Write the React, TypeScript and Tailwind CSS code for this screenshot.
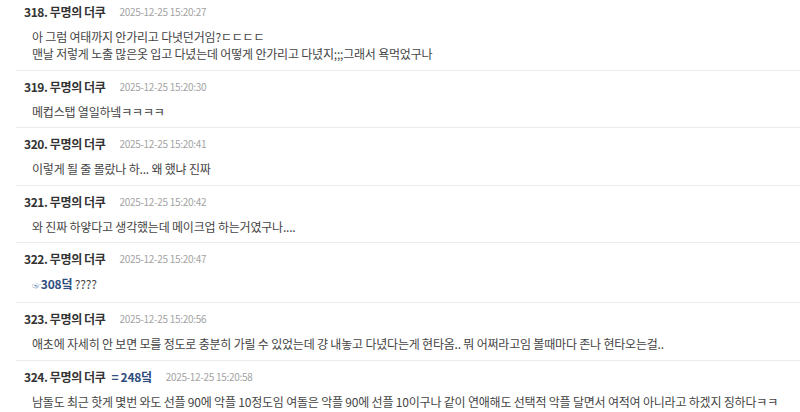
import React from "react";

type Comment = {
  no: number;
  date: string;
  reply?: string;
  lines: React.ReactNode[];
};

const comments: Comment[] = [
  {
    no: 318,
    date: "2025-12-25 15:20:27",
    lines: [
      "아 그럼 여태까지 안가리고 다녓던거임?ㄷㄷㄷㄷ",
      "맨날 저렇게 노출 많은옷 입고 다녔는데 어떻게 안가리고 다녔지;;;그래서 욕먹었구나",
    ],
  },
  { no: 319, date: "2025-12-25 15:20:30", lines: ["메컵스탭 열일하넼ㅋㅋㅋㅋ"] },
  { no: 320, date: "2025-12-25 15:20:41", lines: ["이렇게 될 줄 몰랐나 하... 왜 했냐 진짜"] },
  { no: 321, date: "2025-12-25 15:20:42", lines: ["와 진짜 하얗다고 생각했는데 메이크업 하는거였구나...."] },
  {
    no: 322,
    date: "2025-12-25 15:20:47",
    lines: [
      <span>
        <span className="text-[9px] text-[#5a7fb5]">☞</span>
        <span className="font-bold text-[#2e4d7e]">308덬</span> ????
      </span>,
    ],
  },
  {
    no: 323,
    date: "2025-12-25 15:20:56",
    lines: [
      "애초에 자세히 안 보면 모를 정도로 충분히 가릴 수 있었는데 걍 내놓고 다녔다는게 현타옴.. 뭐 어쩌라고임 볼때마다 존나 현타오는걸..",
    ],
  },
  {
    no: 324,
    date: "2025-12-25 15:20:58",
    reply: "= 248덬",
    lines: [
      "남돌도 최근 핫게 몇번 와도 선플 90에 악플 10정도임 여돌은 악플 90에 선플 10이구나 같이 연애해도 선택적 악플 달면서 여적여 아니라고 하겠지 징하다ㅋㅋ",
    ],
  },
];

function CommentItem({ c }: { c: Comment }) {
  return (
    <li className="border-b border-[#ebebeb] pl-2 pt-2 pb-[7.6px]">
      <div className="flex items-center h-4 leading-4">
        <span className="text-[12px] font-bold text-[#333] tracking-[-0.4px]">
          {c.no}. 무명의 더쿠
        </span>
        {c.reply && (
          <span className="ml-[6px] text-[12px] font-bold text-[#2e4d7e] tracking-[-0.3px]">{c.reply}</span>
        )}
        <span className="ml-[14px] text-[10px] text-[#a3a3a3] tracking-[-0.3px]">
          {c.date}
        </span>
      </div>
      <div className="mt-2 pl-2 text-[12px] leading-[17px] text-[#444] tracking-[-0.2px] whitespace-nowrap">
        {c.lines.map((l, i) => (
          <div key={i}>{l}</div>
        ))}
      </div>
    </li>
  );
}

export default function App() {
  return (
    <div className="w-[800px] h-[412px] overflow-hidden bg-white font-['Noto_Sans_CJK_KR','Noto_Sans',sans-serif]">
      <ul className="pl-4 -mt-1">
        {comments.map((c) => (
          <CommentItem key={c.no} c={c} />
        ))}
      </ul>
    </div>
  );
}
